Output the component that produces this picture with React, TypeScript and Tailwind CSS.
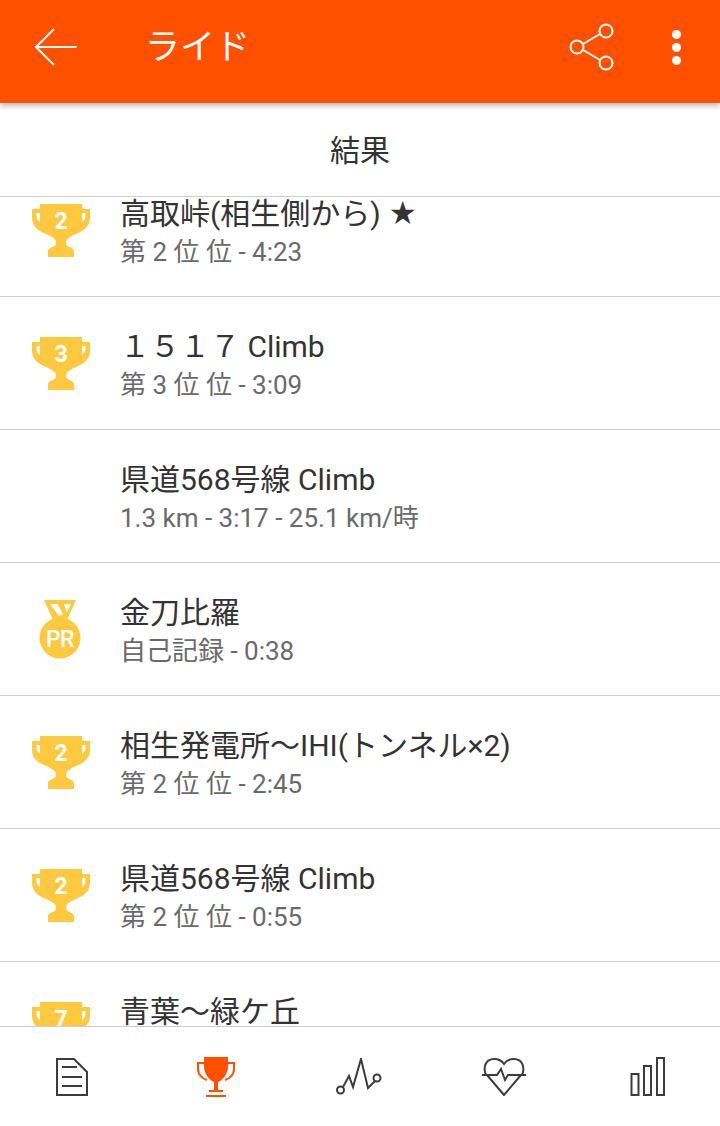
const FONT = 'font-[Roboto,"Noto_Sans_CJK_JP",sans-serif]'

const ROWS = [
  { icon: '2', title: '高取峠(相生側から)', star: true, sub: '第 2 位 位 - 4:23' },
  { icon: '3', title: '１５１７ Climb', sub: '第 3 位 位 - 3:09' },
  { icon: '', title: '県道568号線 Climb', sub: '1.3 km - 3:17 - 25.1 km/時' },
  { icon: 'PR', title: '金刀比羅', sub: '自己記録 - 0:38' },
  { icon: '2', title: '相生発電所〜IHI(トンネル×2)', sub: '第 2 位 位 - 2:45' },
  { icon: '2', title: '県道568号線 Climb', sub: '第 2 位 位 - 0:55' },
  { icon: '7', title: '青葉〜緑ケ丘', sub: '' },
]

function Trophy({ rank }: { rank: string }) {
  return (
    <svg width="58" height="53" viewBox="0 0 58 53">
      <path
        fill="#fec93f"
        fillRule="evenodd"
        d="M8 0H50V5H58V14C58 22 52 27 44 30C38 33 34 35 34 38V40C34 42 39 43 42 46V53H16V46C19 43 24 42 24 40V38C24 35 20 33 14 30C6 27 0 22 0 14V5H8ZM4.5 9V11C4.5 14 6 17 8 18V9ZM53.5 9H50V18C52 17 53.5 14 53.5 11Z"
      />
      <text x="29" y="25" textAnchor="middle" fontSize="23" fontWeight="700" fill="#fff" fontFamily="Roboto, sans-serif">
        {rank}
      </text>
    </svg>
  )
}

function Medal() {
  return (
    <svg width="42" height="60" viewBox="0 0 42 60">
      <path
        fill="#fec93f"
        fillRule="evenodd"
        d="M5 0H37L28 20H14ZM11 4L20 16L24 14L18.3 4ZM25 4L27.7 12.7L32 4Z"
      />
      <circle cx="21" cy="38" r="20.5" fill="#fec93f" />
      <text x="21" y="47" textAnchor="middle" fontSize="23" fontWeight="500" letterSpacing="-0.5" fill="#fff" fontFamily="Roboto, sans-serif">
        PR
      </text>
    </svg>
  )
}

function Row({ icon, title, star, sub }: { icon: string; title: string; star?: boolean; sub: string }) {
  return (
    <div className="h-[133px] shrink-0 border-b border-[#cfcfcf] flex">
      <div className="w-[120px] pl-[32px] pt-[40px] shrink-0">
        {icon === 'PR' ? <div className="pl-[7px] -mt-[3px]"><Medal /></div> : icon && <Trophy rank={icon} />}
      </div>
      <div className="pt-[29px]">
        <div className="h-[40px] mb-px flex items-center text-[30px] text-[#333333] whitespace-nowrap">
          {title}
          {star && <span className="text-[26px] leading-none ml-[9px]">★</span>}
        </div>
        {sub && <p className="text-[26px] leading-[36px] text-[#6a6a6a] whitespace-nowrap">{sub}</p>}
      </div>
    </div>
  )
}

function NavIcon({ children }: { children: React.ReactNode }) {
  return <div className="flex-1 flex justify-center pt-[30px]">{children}</div>
}

export default function App() {
  return (
    <div className={`w-[720px] h-[1126px] bg-white flex flex-col overflow-hidden ${FONT}`}>
      <header className="h-[103px] shrink-0 bg-[#ff5000] flex items-center shadow-[0_2px_6px_rgba(0,0,0,0.35)] relative z-10 text-white">
        <svg className="ml-[34px] -mt-[9px]" width="44" height="40" viewBox="0 0 44 40" fill="none" stroke="#fff" strokeWidth="2">
          <path d="M43 20H2M20 2L2 20L20 38" />
        </svg>
        <h1 className="ml-[67px] -mt-[9px] text-[35px] leading-none">ライド</h1>
        <svg className="ml-auto -mt-[9px]" width="46" height="48" viewBox="0 0 46 48" fill="none" stroke="#fff" strokeWidth="2">
          <circle cx="8" cy="24" r="6.5" />
          <circle cx="37" cy="8" r="6.5" />
          <circle cx="37" cy="40" r="6.5" />
          <path d="M14 21L31 11M14 27L31 37" />
        </svg>
        <div className="ml-[57px] mr-[39px] -mt-[9px] flex flex-col gap-[4px]">
          <span className="w-[9px] h-[9px] rounded-full bg-white" />
          <span className="w-[9px] h-[9px] rounded-full bg-white" />
          <span className="w-[9px] h-[9px] rounded-full bg-white" />
        </div>
      </header>

      <div className="h-[94px] shrink-0 border-b border-[#cfcfcf] flex items-center justify-center pt-[2px] text-[30px] text-[#333333]">
        結果
      </div>

      <div className="flex-1 overflow-hidden">
        <div className="-mt-[33px] flex flex-col">
          {ROWS.map((r, i) => (
            <Row key={i} {...r} />
          ))}
        </div>
      </div>

      <nav className="h-[100px] shrink-0 border-t border-[#cfcfcf] bg-white flex relative">
        <NavIcon>
          <svg width="34" height="40" viewBox="0 0 34 40" fill="none" stroke="#3c3c3c" strokeWidth="2">
            <path d="M2 2H19L32 15V38H2Z" />
            <path d="M7 10H22" />
            <path d="M7 20H27" />
            <path d="M7 29H27" />
          </svg>
        </NavIcon>
        <NavIcon>
          <svg width="38" height="40" viewBox="0 0 38 40" fill="none">
            <path fill="#ff5000" d="M7 0H31V9C31 17 25 24 21 25V33H26V35H12V33H17V25C13 24 7 17 7 9Z" />
            <path d="M7 6H1V12C1 18 6 22 10 23M31 6H37V12C37 18 32 22 28 23" stroke="#ff5000" strokeWidth="2" />
            <path d="M9 39H29" stroke="#ff5000" strokeWidth="2" />
          </svg>
        </NavIcon>
        <NavIcon>
          <svg width="48" height="38" viewBox="0 0 48 38" fill="none" stroke="#3c3c3c" strokeWidth="2" className="mt-px">
            <circle cx="4.5" cy="32" r="3.5" />
            <circle cx="41" cy="20" r="3.5" />
            <path d="M7 29L13 18L17 29L25 1L32 30L39 23" />
          </svg>
        </NavIcon>
        <NavIcon>
          <svg width="44" height="38" viewBox="0 0 44 38" fill="none" stroke="#3c3c3c" strokeWidth="2" className="mt-px">
            <path d="M4 17C1 10 3 1 12 1C17 1 20 3 22 6C24 3 27 1 32 1C41 1 43 10 40 17" />
            <path d="M0 17H15L19 11L23 22L26 17H44" />
            <path d="M5 17L22 37L39 17" />
          </svg>
        </NavIcon>
        <NavIcon>
          <svg width="36" height="39" viewBox="0 0 36 39" fill="none" stroke="#3c3c3c" strokeWidth="2">
            <rect x="1.5" y="17" width="7" height="21" />
            <rect x="14" y="9" width="7" height="29" />
            <rect x="27" y="1" width="7" height="37" />
          </svg>
        </NavIcon>
      </nav>
    </div>
  )
}
